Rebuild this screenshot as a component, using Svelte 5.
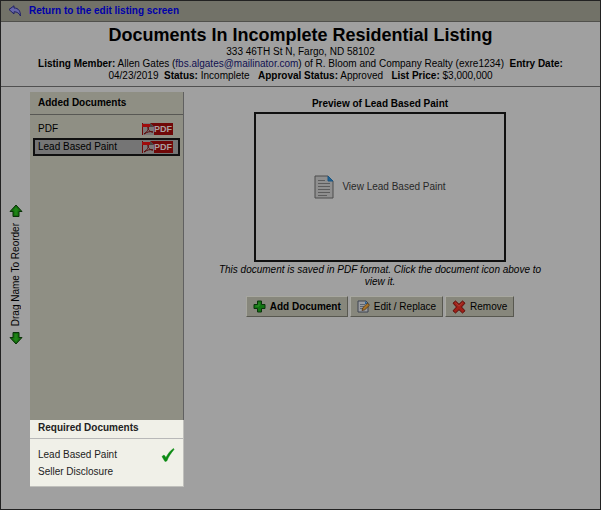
<script lang="ts">
  interface Doc {
    id: number;
    name: string;
  }

  const listing = {
    address: '333 46TH St N, Fargo, ND 58102',
    member: 'Allen Gates',
    email: 'fbs.algates@mailinator.com',
    office: 'R. Bloom and Company Realty (exre1234)',
    entryDate: '04/23/2019',
    status: 'Incomplete',
    approval: 'Approved',
    price: '$3,000,000',
  };

  const added: Doc[] = [
    { id: 1, name: 'PDF' },
    { id: 2, name: 'Lead Based Paint' },
  ];

  const required = ['Lead Based Paint', 'Seller Disclosure'];

  let selectedId = $state(2);
  const selected = $derived(added.find((d) => d.id === selectedId) ?? added[0]);

  function isAdded(name: string): boolean {
    return added.some((d) => d.name === name);
  }
</script>

{#snippet arrow(down: boolean)}
  <svg class="arrow" class:down width="14" height="14" viewBox="0 0 14 14" aria-hidden="true">
    <path d="M7 1 L13 7.5 L10 7.5 L10 12.5 L4 12.5 L4 7.5 L1 7.5 Z" fill="#126c0c" stroke="#0a3208" stroke-linejoin="round" />
    <path d="M7 3 L10 6.5 L8.5 6.5 L8.5 11 L5.5 11 L5.5 6.5 L4 6.5 Z" fill="#1f8416" />
  </svg>
{/snippet}

{#snippet pdfBadge()}
  <span class="pdf">
    <svg width="12" height="12" viewBox="0 0 12 12" aria-hidden="true">
      <path d="M1 0 H8 L12 4 V12 H1 Z" fill="#7c7878" />
      <path d="M8 0 L12 4 H8 Z" fill="#484242" />
      <path d="M0 1 H8 V4 H0 Z" fill="#a00b0b" />
      <path d="M2 11 C5 9 7 6 6 4 C6 8 9 9 11 9 C8 8 5 9 2 11" fill="none" stroke="#5a0808" />
    </svg>
    <span>PDF</span>
  </span>
{/snippet}

<div class="page">
  <nav class="toolbar">
    <a href="#edit">
      <svg width="14" height="12" viewBox="0 0 14 12" aria-hidden="true">
        <path d="M1 4.5 L6 0.8 L6 3 C10.5 3 12.5 6 12.5 11 C11 8 9 6.8 6 6.8 L6 9 Z" fill="#6666a8" stroke="#202066" stroke-linejoin="round" />
      </svg>
      Return to the edit listing screen
    </a>
  </nav>

  <header class="header">
    <h1>Documents In Incomplete Residential Listing</h1>
    <p>{listing.address}</p>
    <p>
      <b>Listing Member:</b> {listing.member} (<a href="mailto:{listing.email}">{listing.email}</a>) of {listing.office}&nbsp;
      <b>Entry Date:</b> {listing.entryDate}&nbsp; <b>Status:</b> {listing.status}&nbsp;&nbsp;
      <b>Approval Status:</b> {listing.approval}&nbsp;&nbsp; <b>List Price:</b> {listing.price}
    </p>
  </header>

  <div class="content">
    <div class="reorder">
      {@render arrow(false)}
      <span>Drag Name To Reorder</span>
      {@render arrow(true)}
    </div>

    <aside class="panels">
      <section class="added">
        <h2>Added Documents</h2>
        <ul>
          {#each added as doc (doc.id)}
            <li>
              <button class="doc" class:selected={doc.id === selectedId} onclick={() => (selectedId = doc.id)}>
                {doc.name}
                {@render pdfBadge()}
              </button>
            </li>
          {/each}
        </ul>
      </section>

      <section class="required">
        <h2>Required Documents</h2>
        <ul>
          {#each required as name}
            <li>
              {name}
              {#if isAdded(name)}
                <svg width="14" height="14" viewBox="0 0 14 14" role="img" aria-label="Added">
                  <path d="M1 8.5 L3 7 L5 9.5 C7 5.5 9.5 2.5 12.5 0.5 L13 1.5 C10 5 7.5 8.5 5.8 13 L4 13.5 Z" fill="#0b8a12" stroke="#0b8a12" stroke-width="0.5" />
                </svg>
              {/if}
            </li>
          {/each}
        </ul>
      </section>
    </aside>

    <main class="preview">
      <h2>Preview of {selected.name}</h2>
      <div class="frame">
        <a href="#view">
          <svg width="20" height="24" viewBox="0 0 20 24" aria-hidden="true">
            <path d="M1 1 H14 L19 6 V23 H1 Z" fill="#8f8f8f" stroke="#4c4c4c" stroke-linejoin="round" />
            <path d="M14 1 L19 6 H14 Z" fill="#1c6296" stroke="#1c5580" />
            <path d="M4 5.5 H11 M4 8.5 H16 M4 11.5 H16 M4 14.5 H16 M4 17.5 H16 M4 20.5 H13" stroke="#5c5c5c" />
          </svg>
          View {selected.name}
        </a>
      </div>
      <p class="note">This document is saved in PDF format. Click the document icon above to view it.</p>

      <div class="actions">
        <button class="primary">
          <svg width="13" height="13" viewBox="0 0 13 13" aria-hidden="true">
            <path d="M4.5 1 H8.5 V4.5 H12 V8.5 H8.5 V12 H4.5 V8.5 H1 V4.5 H4.5 Z" fill="#117411" stroke="#0a340a" stroke-linejoin="round" />
            <path d="M6 2.5 V6 H2.5" fill="none" stroke="#368f2e" />
          </svg>
          Add Document
        </button>
        <button>
          <svg width="13" height="13" viewBox="0 0 13 13" aria-hidden="true">
            <path d="M1 1 H9 L11 3 V12 H1 Z" fill="#9a9ca0" stroke="#3e4450" />
            <path d="M3 4.5 H8 M3 6.5 H7 M3 8.5 H6" stroke="#5c6674" />
            <path d="M8 1 L11 4 H8 Z" fill="#28649c" />
            <path d="M5 10.5 L5.8 7.8 L10.5 3.2 L12.5 5.2 L7.8 9.8 Z" fill="#a87428" stroke="#4c2c10" stroke-width="0.7" />
          </svg>
          Edit / Replace
        </button>
        <button>
          <svg width="14" height="14" viewBox="0 0 14 14" aria-hidden="true">
            <path d="M3.5 1 L7 4.3 L10.5 1 L13 3.2 L9.5 7 L13 10.8 L10.5 13 L7 9.7 L3.5 13 L1 10.8 L4.5 7 L1 3.2 Z" fill="#a02018" stroke="#5c0c08" stroke-linejoin="round" />
            <path d="M3.5 2.8 L7 6.2 L10.5 2.8" fill="none" stroke="#b04034" />
          </svg>
          Remove
        </button>
      </div>
    </main>
  </div>
</div>

<style>
  :global(body) {
    margin: 0;
    background: #a0a0a0;
  }

  .page {
    box-sizing: border-box;
    min-height: 100vh;
    border: 1px solid #222;
    background: #a0a0a0;
    color: #000;
    font: 10px/12px "Liberation Sans", Arial, sans-serif;
  }

  h1,
  h2,
  p,
  ul {
    margin: 0;
    padding: 0;
  }

  h2 {
    font-size: 10px;
    line-height: 12px;
  }

  ul {
    list-style: none;
  }

  button {
    font: inherit;
    color: inherit;
    cursor: pointer;
  }

  svg {
    flex-shrink: 0;
  }

  .toolbar {
    display: flex;
    height: 20px;
    padding-left: 7px;
    background: #727268;
    border-bottom: 1px solid #50504c;
  }

  .toolbar a {
    display: flex;
    align-items: center;
    gap: 7px;
    color: #0000a8;
    font-weight: bold;
    text-decoration: none;
  }

  .header {
    padding: 2px 24px 4px;
    border-bottom: 1px solid #505050;
    text-align: center;
  }

  .header h1 {
    font-size: 18px;
    line-height: 22px;
  }

  .header a {
    color: #101050;
    text-decoration: none;
  }

  .content {
    display: flex;
    padding-top: 5px;
  }

  .reorder {
    display: flex;
    flex-direction: column;
    align-items: center;
    justify-content: center;
    gap: 5px;
    width: 29px;
    padding-bottom: 30px;
    box-sizing: border-box;
  }

  .reorder span {
    writing-mode: vertical-rl;
    transform: rotate(180deg);
  }

  .down {
    transform: rotate(180deg);
  }

  .panels {
    width: 154px;
    flex-shrink: 0;
  }

  .added {
    box-sizing: border-box;
    min-height: 328px;
    background: #8f8f84;
    border-right: 1px solid #606060;
  }

  .panels h2 {
    padding: 5px 8px;
    border-bottom: 1px solid #585854;
  }

  .added ul {
    padding: 5px 3px;
  }

  .doc {
    display: flex;
    align-items: center;
    justify-content: space-between;
    box-sizing: border-box;
    width: 100%;
    height: 18px;
    padding: 0 5px 0 3px;
    border: 2px solid transparent;
    background: none;
    text-align: left;
  }

  .doc.selected {
    border-color: #101010;
    background: #757575;
  }

  .pdf {
    display: flex;
    align-items: center;
    width: 31px;
    height: 12px;
    background: #700808;
    color: #a8a0a0;
    font-size: 9px;
    font-weight: bold;
  }

  .required {
    padding-bottom: 6px;
    background: #f0f0e8;
    border: solid #c0c0bc;
    border-width: 0 1px 1px 0;
    color: #222;
  }

  .required h2 {
    padding: 2px 8px 4px;
    border-color: #b8b8b8;
  }

  .required ul {
    padding: 7px 8px 0;
  }

  .required li {
    display: flex;
    align-items: center;
    justify-content: space-between;
    height: 17px;
  }

  .preview {
    display: flex;
    flex: 1;
    flex-direction: column;
    align-items: center;
    padding: 6px 24px 0 0;
  }

  .frame {
    display: flex;
    align-items: center;
    justify-content: center;
    box-sizing: border-box;
    width: 252px;
    height: 150px;
    margin-top: 2px;
    border: 2px solid #101010;
  }

  .frame a {
    display: flex;
    align-items: center;
    gap: 8px;
    color: #282828;
    text-decoration: none;
  }

  .note {
    max-width: 336px;
    margin-top: 2px;
    font-style: italic;
    text-align: center;
  }

  .actions {
    display: flex;
    gap: 2px;
    margin-top: 8px;
  }

  .actions button {
    display: flex;
    align-items: center;
    gap: 4px;
    height: 21px;
    padding: 0 6px;
    border: 1px solid;
    border-color: #a8a8a0 #585850 #585850 #a8a8a0;
    background: #87877c;
  }

  .actions .primary {
    font-weight: bold;
  }
</style>
